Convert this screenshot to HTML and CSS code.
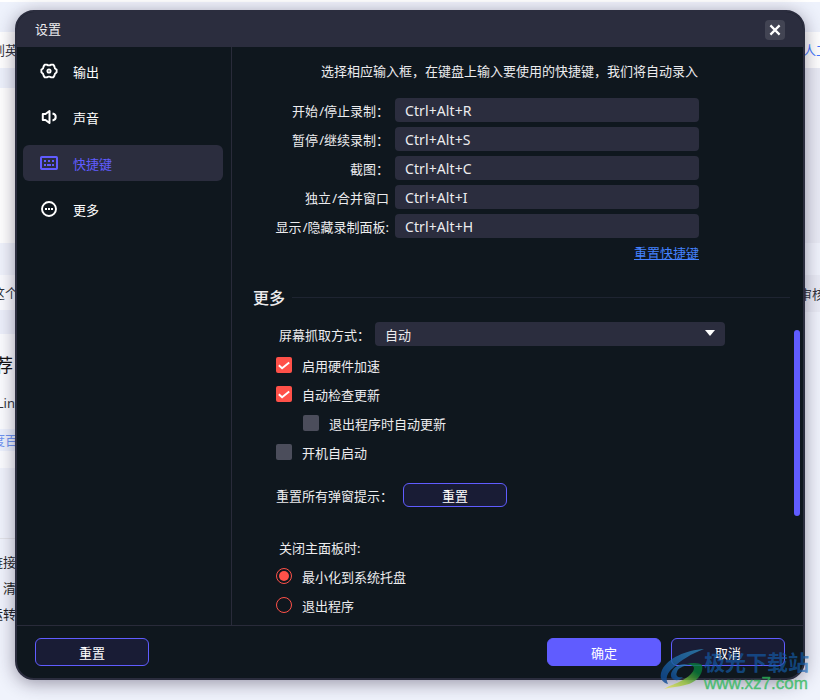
FILE: index.html
```html
<!DOCTYPE html>
<html lang="zh-CN">
<head>
    <meta charset="UTF-8">
    <meta name="viewport" content="width=device-width, initial-scale=1.0">
    <title>设置</title>
    <link rel="stylesheet" href="styles.css">
</head>
<body>
    <!-- Page behind the dialog -->
    <div class="backdrop">
        <div class="strip strip-left">
            <div class="band band-top"></div>
            <div class="band band-tab"><span>到英</span></div>
            <div class="band band-gap"></div>
            <div class="band band-blank"></div>
            <div class="band band-tint"></div>
            <div class="band band-row"><span>这个</span></div>
            <div class="band band-space"></div>
            <div class="band band-card">
                <p class="card-title">推荐</p>
                <p class="card-text">Lin</p>
                <p class="card-tag">度百</p>
            </div>
            <div class="band band-list">
                <p>链接</p>
                <p>清</p>
                <p>运转</p>
            </div>
        </div>
        <div class="strip strip-right">
            <div class="band band-top"></div>
            <div class="band band-tab link"><span>人工</span></div>
            <div class="band band-side"></div>
            <div class="band band-tint"></div>
            <div class="band band-review"><span>审核</span></div>
        </div>
    </div>

    <div class="dialog">
        <header class="titlebar">
            <span>设置</span>
            <button class="close">
                <svg width="20" height="20" viewBox="0 0 20 20"><path d="M5.400 5.400l9.200 9.200M14.600 5.400l-9.200 9.200" stroke="#fff" stroke-width="2.200"/></svg>
            </button>
        </header>

        <div class="body">
            <nav class="sidebar">
                <a class="nav-item">
                    <svg width="18" height="18" viewBox="0 0 18 18" fill="none" stroke="#fff" stroke-width="1.900" stroke-linejoin="round"><path d="M4.800 2.600h2q2.200 1.500 4.400 0h2l1.200 1.800q0 2.300 2.200 3.300v2.600q-2.200 1-2.200 3.300l-1.200 1.800h-2q-2.200-1.500-4.400 0h-2l-1.200-1.800q0-2.300-2.200-3.300V7.700q2.200-1 2.200-3.300z"/><circle cx="9" cy="9" r="1.600"/></svg>
                    <span>输出</span>
                </a>
                <a class="nav-item">
                    <svg width="18" height="18" viewBox="0 0 18 18" fill="none" stroke="#fff" stroke-width="2"><path d="M2.800 6h2.700L9.500 3v12l-4-3H2.800z" stroke-linejoin="round"/><path d="M12.500 5.600c4.300.8 4.300 6 0 6.800"/></svg>
                    <span>声音</span>
                </a>
                <a class="nav-item active">
                    <svg width="18" height="18" viewBox="0 0 18 18" fill="none" stroke="#605cff"><rect x="1" y="3" width="16" height="12" rx=".7" stroke-width="2"/><path d="M4 7h2M8 7h2M12 7h2M4 11h2M7 11h4M12 11h2" stroke-width="2"/></svg>
                    <span>快捷键</span>
                </a>
                <a class="nav-item">
                    <svg width="18" height="18" viewBox="0 0 18 18"><circle cx="9" cy="9" r="7" fill="none" stroke="#fff" stroke-width="1.900"/><path d="M5 8h2v2H5zM8 8h2v2H8zM11 8h2v2h-2z" fill="#fff"/></svg>
                    <span>更多</span>
                </a>
            </nav>

            <main class="content">
                <p class="hint">选择相应输入框，在键盘上输入要使用的快捷键，我们将自动录入</p>
                <div class="hotkeys">
                    <label>开始<b>/</b>停止录制<b class="colon">：</b></label><div class="field">Ctrl+Alt+R</div>
                    <label>暂停<b>/</b>继续录制<b class="colon">：</b></label><div class="field">Ctrl+Alt+S</div>
                    <label>截图<b class="colon">：</b></label><div class="field">Ctrl+Alt+C</div>
                    <label>独立<b>/</b>合并窗口</label><div class="field">Ctrl+Alt+I</div>
                    <label>显示<b>/</b>隐藏录制面板:</label><div class="field">Ctrl+Alt+H</div>
                </div>
                <a class="reset-link">重置快捷键</a>

                <h2 class="section"><span>更多</span></h2>

                <div class="select-row">
                    <label>屏幕抓取方式<b class="colon">：</b></label>
                    <div class="select">
                        <span>自动</span>
                        <svg width="10" height="6" viewBox="0 0 10 6"><path d="M0 0h10L5 6z" fill="#fff"/></svg>
                    </div>
                </div>

                <div class="option">
                    <i class="check on"><svg width="16" height="16" viewBox="0 0 16 16"><path d="M2.800 8.200l3.300 3L13.200 5.500" fill="none" stroke="#fff" stroke-width="1.900"/></svg></i>
                    <span>启用硬件加速</span>
                </div>
                <div class="option">
                    <i class="check on"><svg width="16" height="16" viewBox="0 0 16 16"><path d="M2.800 8.200l3.300 3L13.200 5.500" fill="none" stroke="#fff" stroke-width="1.900"/></svg></i>
                    <span>自动检查更新</span>
                </div>
                <div class="option nested"><i class="check"></i><span>退出程序时自动更新</span></div>
                <div class="option"><i class="check"></i><span>开机自启动</span></div>

                <div class="reset-row">
                    <label>重置所有弹窗提示<b class="colon">：</b></label>
                    <button class="button small">重置</button>
                </div>

                <p class="group-label">关闭主面板时:</p>
                <div class="option"><i class="radio on"></i><span>最小化到系统托盘</span></div>
                <div class="option"><i class="radio"></i><span>退出程序</span></div>

                <div class="scrollbar"></div>
            </main>
        </div>

        <footer class="footer">
            <button class="button">重置</button>
            <button class="button primary">确定</button>
            <button class="button">取消</button>
        </footer>
    </div>

    <div class="watermark">
        <svg width="46" height="42" viewBox="0 0 46 42">
            <defs>
                <linearGradient id="blue" x1="0" y1="1" x2="1" y2="0">
                    <stop offset="0" stop-color="#0d4794"/>
                    <stop offset="1" stop-color="#2f86b8"/>
                </linearGradient>
                <linearGradient id="green" x1="0" y1="1" x2="1" y2="0">
                    <stop offset="0" stop-color="#f0e45a"/>
                    <stop offset=".4" stop-color="#8fbd35"/>
                    <stop offset=".75" stop-color="#087c3a"/>
                </linearGradient>
            </defs>
            <path d="M45 0C27 1 9 9 3 21c-3 7-1 12 6 14-3-6-1-11 5-16C22 11 32 5 45 0z" fill="url(#blue)"/>
            <path d="M30 16c-9-3-17 3-18 9-1 7 8 8 12 3-5 1-8-1-6-5 1-4 6-6 12-7z" fill="url(#blue)"/>
            <path d="M28 15c6-2 13-1 15 1 2 9-6 18-17 20-7 2-13 2-21 4 6-4 12-5 17-8 8-4 13-9 13-13 0-2-3-3-7-4z" fill="url(#green)"/>
        </svg>
        <div class="watermark-text">
            <span class="site-name">极光下载站</span>
            <span class="site-url">www.xz7.com</span>
        </div>
    </div>
</body>
</html>
```
FILE: styles.css
```css
:root {
    --primary-color: #605cff;
    --danger-color: #ff5149;
    --panel-bg: #0f171e;
    --field-bg: #2b2d3e;
    --text-color: #ececee;
    --button-bg: #191c35;
}

* {
    box-sizing: border-box;
}

body {
    margin: 0;
    width: 820px;
    height: 700px;
    position: relative;
    overflow: hidden;
    font-family: "Noto Sans", "Noto Sans CJK SC", sans-serif;
    font-size: 13px;
    line-height: 20px;
    color: var(--text-color);
    background: #f0f3fc;
}

p, h2 {
    margin: 0;
}

svg {
    display: block;
}

/* page behind */
.backdrop {
    display: flex;
    justify-content: space-between;
    height: 700px;
    border-top: 2px solid #fff;
    color: #30333b;
}

.strip {
    width: 20px;
    overflow: hidden;
    white-space: nowrap;
}

.strip-left {
    direction: rtl;
}

.band {
    display: flex;
    align-items: center;
}

.strip-left .band {
    padding-right: 2px;
}

.band-top {
    height: 30px;
    background: #eef2fc;
}

.band-tab {
    height: 36px;
    background: #fff;
}

.band-tab.link {
    padding-left: 3px;
    color: #4377ff;
}

.band-gap {
    height: 20px;
    background: #eef2fc;
}

.band-blank {
    height: 155px;
    background: #fff;
}

.band-tint {
    height: 32px;
    background: #f0f3fc;
}

.band-row {
    height: 35px;
    background: #fafbff;
}

.band-space {
    height: 24px;
    background: #edf0fb;
}

.strip-left .band-card {
    display: block;
    height: 134px;
    padding: 19px 0 0;
    background: #fbfcff;
}

.card-title {
    padding-right: 7px;
    font-size: 18px;
    line-height: 24px;
    color: #111;
}

.card-text {
    margin-top: 16px;
    padding-right: 5px;
}

.card-tag {
    margin-top: 16px;
    padding-right: 2px;
    line-height: 22px;
    color: #6d92f0;
    background: #edf2fe;
}

.band-list {
    display: block;
    height: 232px;
    padding-top: 84px;
    color: #1c1e24;
    background: linear-gradient(#e2e3e8, #e2e3e8) 0 70px / 100% 1px no-repeat #f0f3fc;
}

.strip-left .band-list {
    padding-right: 4px;
}

.band-list p {
    margin-bottom: 6px;
}

.band-side {
    height: 175px;
    background: #e9ebf5;
}

.band-review {
    height: 37px;
    background: #e9ebf5;
}

.band-review span {
    margin-left: -1px;
}

/* dialog */
.dialog {
    position: absolute;
    left: 15px;
    top: 10px;
    width: 790px;
    height: 670px;
    display: flex;
    flex-direction: column;
    border: 2px solid var(--field-bg);
    border-radius: 19px;
    overflow: hidden;
    background: var(--panel-bg);
    box-shadow: 0 3px 18px rgba(40, 30, 60, 0.45);
}

.titlebar {
    flex: none;
    display: flex;
    align-items: center;
    justify-content: space-between;
    height: 35px;
    padding: 0 18px;
    background: var(--field-bg);
}

.titlebar span {
    margin-top: -2px;
}

.close {
    width: 20px;
    height: 20px;
    padding: 0;
    border: none;
    border-radius: 4px;
    background: #424453;
}

.body {
    flex: 1;
    display: flex;
    min-height: 0;
}

.sidebar {
    width: 215px;
    padding: 6px;
    border-right: 1px solid #292b3a;
    display: flex;
    flex-direction: column;
    gap: 10px;
}

.nav-item {
    display: flex;
    align-items: center;
    gap: 15px;
    width: 200px;
    height: 36px;
    padding-left: 17px;
    border-radius: 6px;
    color: #fff;
}

.nav-item svg {
    margin-top: -1px;
}

.nav-item span {
    margin-top: 2px;
}

.nav-item.active {
    background: var(--field-bg);
    color: var(--primary-color);
}

.content {
    position: relative;
    flex: 1;
    display: flex;
    flex-direction: column;
    padding: 14px 13px 0 21px;
}

.hint {
    width: 445px;
    text-align: right;
}

.hotkeys {
    display: grid;
    grid-template-columns: 137px 304px;
    grid-auto-rows: 24px;
    gap: 5px;
    margin-top: 17px;
}

.hotkeys label {
    text-align: right;
    line-height: 26px;
    padding-right: 1px;
    white-space: nowrap;
}

label b {
    display: inline-block;
    width: 6px;
    font-weight: normal;
}

label .colon {
    width: 13px;
    text-align: left;
}

.field {
    padding-left: 10px;
    border-radius: 4px;
    font-size: 14px;
    letter-spacing: 0.1px;
    line-height: 26px;
    background: var(--field-bg);
}

.reset-link {
    width: 446px;
    margin-top: 5px;
    text-align: right;
    text-decoration: underline;
    color: #4482ff;
}

.section {
    display: flex;
    align-items: center;
    gap: 7px;
    height: 24px;
    margin-top: 22px;
    font-size: 16px;
    font-weight: 500;
    line-height: 24px;
}

.section span {
    margin-top: 2px;
}

.section::after {
    content: "";
    flex: 1;
    height: 1px;
    background: #1e2431;
}

.select-row {
    display: flex;
    height: 24px;
    margin-top: 13px;
    padding-left: 26px;
}

.select-row label {
    width: 96px;
    line-height: 26px;
}

.select {
    display: flex;
    align-items: center;
    justify-content: space-between;
    width: 350px;
    height: 24px;
    padding: 0 10px;
    border-radius: 4px;
    background: var(--field-bg);
}

.select span {
    margin-top: 1px;
}

.select svg {
    margin-top: -2px;
}

.option {
    display: flex;
    align-items: center;
    gap: 10px;
    height: 20px;
    margin: 0 0 9px 23px;
}

.select-row + .option {
    margin-top: 9px;
}

.option.nested {
    margin-left: 50px;
}

.option span {
    margin-top: 1px;
}

.check {
    width: 16px;
    height: 16px;
    border-radius: 2px;
    background: #4b4d5b;
}

.check.on {
    background: var(--danger-color);
}

.radio {
    width: 16px;
    height: 16px;
    border: 1px solid var(--danger-color);
    border-radius: 50%;
}

.radio.on {
    padding: 2px;
    background: var(--danger-color) content-box;
}

.reset-row {
    display: flex;
    height: 24px;
    margin: 12px 0 0 23px;
}

.reset-row label {
    width: 127px;
    line-height: 27px;
}

.button {
    width: 114px;
    height: 28px;
    padding: 1px 0 0;
    border: 1px solid var(--primary-color);
    border-radius: 6px;
    font: inherit;
    color: #fff;
    background: var(--button-bg);
}

.button.small {
    width: 104px;
    height: 24px;
}

.button.primary {
    background: var(--primary-color);
}

.group-label {
    margin: 31px 0 8px 26px;
}

.scrollbar {
    position: absolute;
    right: 3px;
    top: 283px;
    width: 6px;
    height: 186px;
    border-radius: 3px;
    background: var(--primary-color);
}

.footer {
    flex: none;
    display: flex;
    gap: 10px;
    height: 53px;
    padding: 12px 18px;
    border-top: 1px solid #292b3a;
}

.footer .primary {
    margin-left: auto;
}

/* site watermark */
.watermark {
    position: absolute;
    left: 659px;
    top: 649px;
    display: flex;
}

.watermark svg {
    opacity: 0.8;
}

.watermark-text {
    display: flex;
    flex-direction: column;
    margin-left: -1px;
    white-space: nowrap;
}

.site-name {
    margin-top: -1px;
    font: 700 21px/26px "Noto Sans CJK SC", sans-serif;
    color: rgba(20, 95, 175, 0.65);
}

.site-url {
    font: 17px/22px "Liberation Sans", sans-serif;
    -webkit-text-stroke: 0.4px;
    margin-top: -1px;
    color: rgba(45, 185, 90, 0.75);
}
```
